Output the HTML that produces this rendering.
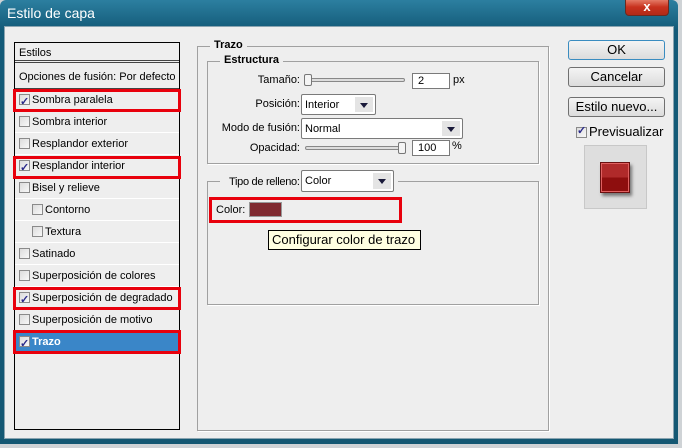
<!DOCTYPE html>
<html><head><meta charset="utf-8"><style>
*{box-sizing:border-box;margin:0;padding:0}
body{width:682px;height:448px;background:#cfd3d6;position:relative;overflow:hidden;font-family:"Liberation Sans",sans-serif;font-size:11px;color:#000}
.a{position:absolute;white-space:nowrap}
#win{left:0;top:0;width:678px;height:444px;background:linear-gradient(#2c7fa0,#135a78 30px,#145873);border-radius:6px 6px 0 0}
#title{left:7px;top:5px;color:#fff;font-size:14px}
#body{left:4px;top:26px;width:670px;height:413px;background:#eeeeee;border:1px solid #8aa4b0}
#close{left:625px;top:-2px;width:44px;height:18px;background:linear-gradient(#e88470,#c8321e 50%,#b22a18);border:1px solid #6a2a20;border-radius:0 0 4px 4px;color:#fff;font-weight:bold;font-size:13px;text-align:center;line-height:15px}
#list{left:14px;top:42px;width:166px;height:388px;border:1px solid #000;background:#eeeeee}
.row{position:absolute;left:0;width:164px;height:22px;border-bottom:1px solid #fff;line-height:23px;padding-left:4px;white-space:nowrap}
.cb{display:inline-block;width:11px;height:11px;border:1px solid #8a8a8a;background:linear-gradient(135deg,#dcdcdc,#f8f8f8);vertical-align:-2px;margin-right:2px;position:relative}
.cb.c::after{content:"✓";position:absolute;left:0;top:-4px;font-size:11px;color:#2a2a8a;font-weight:bold}
.red{position:absolute;border:3px solid #e8000c}
.grp{position:absolute;border:1px solid #a0a0a0;box-shadow:1px 1px 0 #fff}
.lg{position:absolute;background:#eeeeee;padding:0 4px;font-weight:bold}
.lbl{position:absolute;text-align:right;white-space:nowrap}
.inp{position:absolute;background:#fff;border:1px solid #7a7a7a;padding-left:5px;line-height:15px}
.sel{position:absolute;background:#fff;border:1px solid #7a7a7a;border-radius:2px;padding-left:3px;display:flex;align-items:center}
.sel i{position:absolute;right:2px;top:2px;bottom:2px;width:18px;background:#e4e4e4}
.sel i::after{content:"";position:absolute;left:5px;top:6px;border:4px solid transparent;border-top:5px solid #1a1a3a}
.sl{position:absolute;height:4px;border:1px solid #888;border-radius:2px;background:#ddd}
.th{position:absolute;width:8px;height:12px;border:1px solid #777;border-radius:2px;background:#f4f4f4}
.btn{position:absolute;left:568px;width:97px;height:20px;border:1px solid #707070;border-radius:3px;background:linear-gradient(#f4f4f4,#dcdcdc);text-align:center;line-height:18px;font-size:13px}
</style></head><body>
<div class="a" id="win"></div>
<div class="a" id="title">Estilo de capa</div>
<div class="a" id="close">x</div>
<div class="a" id="body"></div>

<div class="a" id="list">
<div class="row" style="top:0;height:20px;line-height:20px;border-bottom:3px double #444">Estilos</div>
<div class="row" style="top:23px;height:23px;border-bottom:1px solid #444">Opciones de fusión: Por defecto</div>
<div class="row" style="top:46px"><span class="cb c"></span>Sombra paralela</div>
<div class="row" style="top:68px"><span class="cb"></span>Sombra interior</div>
<div class="row" style="top:90px"><span class="cb"></span>Resplandor exterior</div>
<div class="row" style="top:112px"><span class="cb c"></span>Resplandor interior</div>
<div class="row" style="top:134px"><span class="cb"></span>Bisel y relieve</div>
<div class="row" style="top:156px;padding-left:17px"><span class="cb"></span>Contorno</div>
<div class="row" style="top:178px;padding-left:17px"><span class="cb"></span>Textura</div>
<div class="row" style="top:200px"><span class="cb"></span>Satinado</div>
<div class="row" style="top:222px"><span class="cb"></span>Superposición de colores</div>
<div class="row" style="top:244px"><span class="cb c"></span>Superposición de degradado</div>
<div class="row" style="top:266px"><span class="cb"></span>Superposición de motivo</div>
<div class="row" style="top:288px;background:#3a86c8;color:#fff;font-weight:bold"><span class="cb c"></span>Trazo</div>
</div>
<div class="red" style="left:13px;top:89px;width:168px;height:23px"></div>
<div class="red" style="left:13px;top:156px;width:168px;height:23px"></div>
<div class="red" style="left:13px;top:287px;width:168px;height:23px"></div>
<div class="red" style="left:13px;top:330px;width:168px;height:24px"></div>

<div class="grp" style="left:197px;top:46px;width:352px;height:385px"></div>
<div class="lg" style="left:210px;top:39px">Trazo</div>
<div class="grp" style="left:207px;top:61px;width:332px;height:103px"></div>
<div class="lg" style="left:220px;top:54px">Estructura</div>
<div class="lbl" style="left:220px;top:74px;width:80px">Tamaño:</div>
<div class="sl" style="left:305px;top:78px;width:100px"></div>
<div class="th" style="left:304px;top:74px"></div>
<div class="inp" style="left:412px;top:73px;width:38px;height:16px">2</div>
<div class="a" style="left:453px;top:74px">px</div>
<div class="lbl" style="left:220px;top:98px;width:80px">Posición:</div>
<div class="sel" style="left:301px;top:94px;width:75px;height:21px">Interior<i></i></div>
<div class="lbl" style="left:200px;top:122px;width:100px">Modo de fusión:</div>
<div class="sel" style="left:301px;top:118px;width:162px;height:21px">Normal<i></i></div>
<div class="lbl" style="left:220px;top:142px;width:80px">Opacidad:</div>
<div class="sl" style="left:305px;top:146px;width:100px"></div>
<div class="th" style="left:398px;top:142px"></div>
<div class="inp" style="left:412px;top:140px;width:38px;height:16px">100</div>
<div class="a" style="left:452px;top:140px">%</div>

<div class="grp" style="left:207px;top:181px;width:332px;height:124px"></div>
<div class="a" style="left:220px;top:172px;width:178px;height:20px;background:#eeeeee"></div>
<div class="a" style="left:229px;top:176px;letter-spacing:-0.3px">Tipo de relleno:</div>
<div class="sel" style="left:301px;top:170px;width:93px;height:22px">Color<i></i></div>
<div class="red" style="left:209px;top:197px;width:193px;height:26px"></div>
<div class="a" style="left:216px;top:204px">Color:</div>
<div class="a" style="left:249px;top:202px;width:33px;height:15px;background:#7f2a30;border:1px solid #999"></div>
<div class="a" style="left:268px;top:230px;width:153px;height:20px;background:#ffffe1;border:1px solid #000;font-size:13px;line-height:18px;padding-left:3px">Configurar color de trazo</div>

<div class="btn" style="top:40px;border-color:#3a8cc0">OK</div>
<div class="btn" style="top:67px">Cancelar</div>
<div class="btn" style="top:97px">Estilo nuevo...</div>
<div class="a" style="left:576px;top:124px;font-size:13px"><span class="cb c"></span>Previsualizar</div>
<div class="a" style="left:584px;top:145px;width:63px;height:64px;background:#dedede;border:1px solid #c8c8c8"></div>
<div class="a" style="left:600px;top:162px;width:30px;height:31px;background:linear-gradient(#b02a2a 50%,#8e0e0e 50%);border:1px solid #6a1010;box-shadow:inset 0 0 0 1px #e06060,2px 3px 3px #777"></div>
</body></html>
